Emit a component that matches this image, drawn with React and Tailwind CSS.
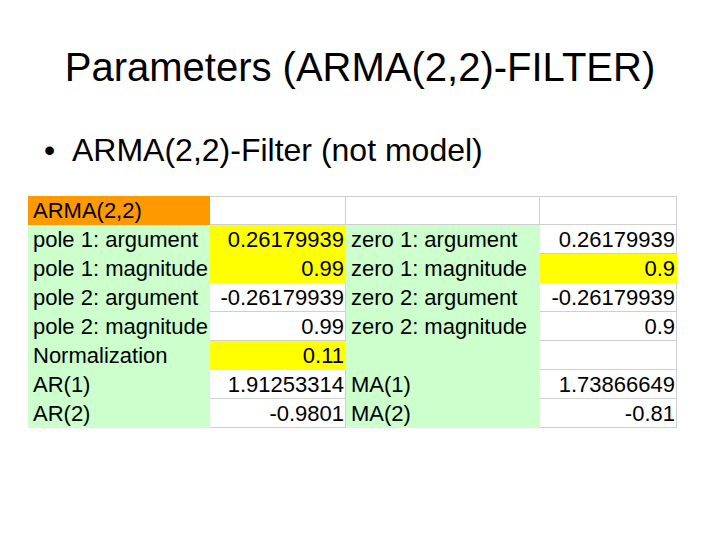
import React from 'react';

const G = 'bg-[#ccffcc] border-transparent';
const Y = 'bg-[#ffff00] border-transparent';
const O = 'bg-[#ff9900] border-transparent';
const W = 'bg-white border-[#cfcfcf]';

const rows = [
  [['ARMA(2,2)', O, 'l'], ['', W, 'r'], ['', W, 'l'], ['', W, 'r']],
  [['pole 1: argument', G, 'l'], ['0.26179939', Y, 'r'], ['zero 1: argument', G, 'l'], ['0.26179939', W, 'r']],
  [['pole 1: magnitude', G, 'l'], ['0.99', Y, 'r'], ['zero 1: magnitude', G, 'l'], ['0.9', Y, 'r']],
  [['pole 2: argument', G, 'l'], ['-0.26179939', W, 'r'], ['zero 2: argument', G, 'l'], ['-0.26179939', W, 'r']],
  [['pole 2: magnitude', G, 'l'], ['0.99', W, 'r'], ['zero 2: magnitude', G, 'l'], ['0.9', W, 'r']],
  [['Normalization', G, 'l'], ['0.11', Y, 'r'], ['', G, 'l'], ['', W, 'r']],
  [['AR(1)', G, 'l'], ['1.91253314', W, 'r'], ['MA(1)', G, 'l'], ['1.73866649', W, 'r']],
  [['AR(2)', G, 'l'], ['-0.9801', W, 'r'], ['MA(2)', G, 'l'], ['-0.81', W, 'r']],
];

const App = () => {
  return (
    <div className="w-[720px] h-[540px] bg-white text-black overflow-hidden" style={{ fontFamily: '"Liberation Sans", Arial, sans-serif' }}>
      <h1 className="pt-[44px] text-center text-[40px] leading-[46px] font-normal">Parameters (ARMA(2,2)-FILTER)</h1>

      <div className="mt-[42px] pl-[44px] flex items-baseline text-[32px] leading-[37px]">
        <span className="w-[28px]">•</span>
        <span>ARMA(2,2)-Filter (not model)</span>
      </div>

      <div className="mt-[27px] ml-[28px] grid grid-cols-[182px_136px_194px_137px] text-[22px] leading-[25px]">
        {rows.map((row, ri) =>
          row.map(([text, cls, align], ci) => (
            <div
              key={`${ri}-${ci}`}
              className={`h-[29px] border-r border-b ${ri === 0 ? 'border-t' : ''} ${cls} flex items-end pb-[1px] whitespace-nowrap ${align === 'r' ? 'justify-end pr-[1px]' : 'pl-[5px]'}`}
            >
              {text}
            </div>
          ))
        )}
      </div>
    </div>
  );
};

export default App;
